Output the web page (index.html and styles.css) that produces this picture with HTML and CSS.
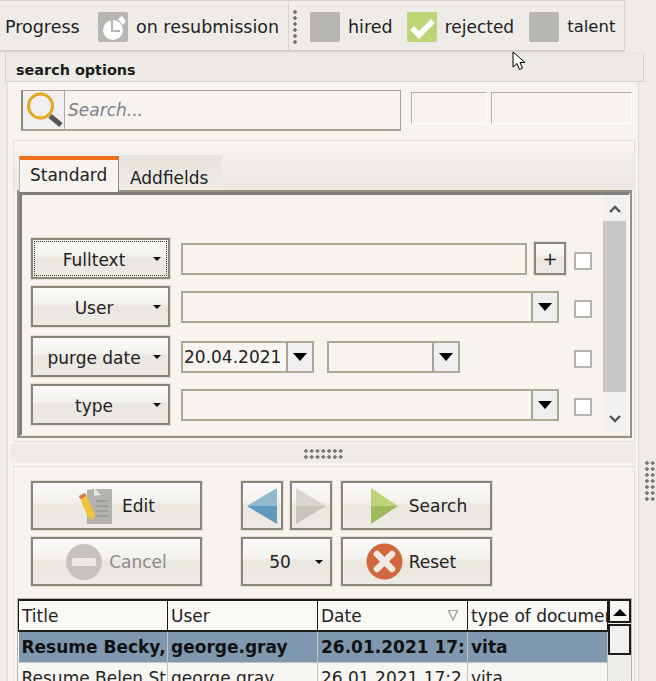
FILE: index.html
```html
<!DOCTYPE html>
<html lang="en">
<head>
    <meta charset="UTF-8">
    <meta name="viewport" content="width=device-width, initial-scale=1.0">
    <title>Search options</title>
    <link rel="stylesheet" href="styles.css">
</head>
<body>
    <div class="toolbar">
        <div class="toolbar-main">
            <span class="tool-title">Progress</span>
            <span class="state-box state-clock">
                <svg width="30" height="30" viewBox="0 0 30 30">
                    <circle cx="15" cy="18" r="10" fill="#fff"/>
                    <path d="M20 7l4-3 4 5-3 4z" fill="#fff"/>
                    <path d="M14 7v12h8" fill="none" stroke="#b7b6b3" stroke-width="2.200"/>
                </svg>
            </span>
            <span class="tool-label">on resubmission</span>
        </div>
        <div class="toolbar-grip"></div>
        <span class="state-box state-hired"></span>
        <span class="tool-label label-hired">hired</span>
        <span class="state-box state-rejected">
            <svg width="30" height="30" viewBox="0 0 30 30">
                <path d="M5 16l7 7L26 9" fill="none" stroke="#fff" stroke-width="5.500"/>
            </svg>
        </span>
        <span class="tool-label label-rejected">rejected</span>
        <span class="state-box state-talent"></span>
        <span class="tool-label label-talent">talent</span>
    </div>

    <div class="section-head">search options</div>

    <div class="layout">
        <div class="content">
            <div class="search-row">
                <div class="search-box">
                    <span class="search-icon">
                        <svg width="40" height="38" viewBox="0 0 40 38">
                            <circle cx="17.500" cy="15" r="12" fill="none" stroke="#e3a91f" stroke-width="3"/>
                            <path d="M27 25l11 9" stroke="#555" stroke-width="5"/>
                        </svg>
                    </span>
                    <span class="search-text">Search...</span>
                </div>
                <div class="sunken sunken-small"></div>
                <div class="sunken sunken-wide"></div>
            </div>

            <div class="filter-group">
                <div class="tab-strip">
                    <div class="tab tab-active">Standard</div>
                    <div class="tab">Addfields</div>
                </div>
                <div class="frame">
                    <div class="frame-inner">
                        <div class="filter-rows">
                            <div class="filter-row">
                                <div class="btn filter-btn btn-focus"><span class="filter-name">Fulltext</span><span class="caret"></span></div>
                                <div class="controls">
                                    <div class="field field-text"></div>
                                    <div class="btn plus-btn">+</div>
                                </div>
                                <span class="check"></span>
                            </div>
                            <div class="filter-row filter-row-user">
                                <div class="btn filter-btn"><span class="filter-name">User</span><span class="caret"></span></div>
                                <div class="controls">
                                    <div class="field combo combo-full"><span class="combo-value"></span><span class="combo-arrow"></span></div>
                                </div>
                                <span class="check"></span>
                            </div>
                            <div class="filter-row">
                                <div class="btn filter-btn"><span class="filter-name">purge date</span><span class="caret"></span></div>
                                <div class="controls controls-date">
                                    <div class="field combo combo-date"><span class="combo-value">20.04.2021</span><span class="combo-arrow"></span></div>
                                    <div class="field combo combo-date"><span class="combo-value"></span><span class="combo-arrow"></span></div>
                                </div>
                                <span class="check"></span>
                            </div>
                            <div class="filter-row">
                                <div class="btn filter-btn"><span class="filter-name">type</span><span class="caret"></span></div>
                                <div class="controls">
                                    <div class="field combo combo-full"><span class="combo-value"></span><span class="combo-arrow"></span></div>
                                </div>
                                <span class="check"></span>
                            </div>
                        </div>
                        <div class="scrollbar">
                            <div class="scroll-up">
                                <svg width="14" height="10" viewBox="0 0 14 10"><path d="M2 8l5-5 5 5" fill="none" stroke="#555" stroke-width="2.400"/></svg>
                            </div>
                            <div class="scroll-thumb"></div>
                            <div class="scroll-down">
                                <svg width="14" height="10" viewBox="0 0 14 10"><path d="M2 2l5 5 5-5" fill="none" stroke="#555" stroke-width="2.400"/></svg>
                            </div>
                        </div>
                    </div>
                </div>
            </div>

            <div class="splitter"><div class="splitter-dots"></div></div>

            <div class="results-group">
                <div class="actions">
                    <div class="btn action-btn">
                        <svg width="38" height="38" viewBox="0 0 38 38">
                            <path d="M9 3l6-1h19v35H9z" fill="#b3b2ae"/>
                            <path d="M16 1l7 7-7 1z" fill="#e8e6e1"/>
                            <path d="M18 14h12M18 19h12M18 24h12M18 29h12" stroke="#98968f" stroke-width="1.500"/>
                            <path d="M1 9l6-3 10 21-2 6-5-3z" fill="#eec43c"/>
                            <path d="M1 9l6-3 1.500 3-6 3z" fill="#e0744a"/>
                        </svg>
                        <span>Edit</span>
                    </div>
                    <div class="btn action-btn col-prev">
                        <svg width="32" height="36" viewBox="0 0 32 36">
                            <path d="M31 0v18H1z" fill="#92b8cf"/>
                            <path d="M31 36V18H1z" fill="#5f9abd"/>
                        </svg>
                    </div>
                    <div class="btn action-btn col-next">
                        <svg width="32" height="36" viewBox="0 0 32 36">
                            <path d="M1 0v18h30z" fill="#d9d6d0"/>
                            <path d="M1 36V18h30z" fill="#c7c4be"/>
                        </svg>
                    </div>
                    <div class="btn action-btn col-main action-search">
                        <svg width="27" height="36" viewBox="0 0 27 36">
                            <path d="M0 0v18h27z" fill="#bcd477"/>
                            <path d="M0 36V18h27z" fill="#9dba5e"/>
                        </svg>
                        <span>Search</span>
                    </div>
                    <div class="btn action-btn action-off">
                        <svg width="36" height="36" viewBox="0 0 36 36">
                            <circle cx="18" cy="18" r="18" fill="#c6c3be"/>
                            <rect x="6" y="14" width="24" height="8" rx="2" fill="#ebe9e4"/>
                        </svg>
                        <span>Cancel</span>
                    </div>
                    <div class="btn action-btn col-count"><span class="filter-name">50</span><span class="caret"></span></div>
                    <div class="btn action-btn col-main action-reset">
                        <svg width="37" height="37" viewBox="0 0 37 37">
                            <circle cx="18.500" cy="18.500" r="18" fill="#d0683c"/>
                            <path d="M11 11l15 15M26 11L11 26" stroke="#f1e9e2" stroke-width="6.500" stroke-linecap="round"/>
                        </svg>
                        <span>Reset</span>
                    </div>
                </div>

                <div class="grid-wrap">
                    <table class="doc-table">
                        <thead>
                            <tr>
                                <th class="col-title">Title</th>
                                <th class="col-user">User</th>
                                <th class="col-date">Date<svg class="sort-mark" width="12" height="12" viewBox="0 0 12 12"><path d="M1.500 1.500h9L6 11z" fill="none" stroke="#9c9c9c" stroke-width="1.200"/></svg></th>
                                <th class="col-type">type of document</th>
                            </tr>
                        </thead>
                        <tbody>
                            <tr class="row-selected">
                                <td>Resume Becky,</td>
                                <td>george.gray</td>
                                <td>26.01.2021 17:</td>
                                <td>vita</td>
                            </tr>
                            <tr>
                                <td>Resume Belen St</td>
                                <td>george.gray</td>
                                <td>26.01.2021 17:2</td>
                                <td>vita</td>
                            </tr>
                        </tbody>
                    </table>
                    <div class="grid-scroll">
                        <div class="grid-up"><span class="grid-up-arrow"></span></div>
                        <div class="grid-thumb"></div>
                    </div>
                </div>
            </div>
        </div>
        <div class="side-grip"><div class="side-dots"></div></div>
    </div>

    <svg class="cursor" width="14" height="22" viewBox="0 0 14 22">
        <path d="M1 1v15l4-3.500 2.500 6 3-1.300-2.500-5.700h5z" fill="#fff" stroke="#000" stroke-width="1"/>
    </svg>
</body>
</html>
```

FILE: styles.css
```css
html, body {
    margin: 0;
    height: 100%;
    overflow: hidden;
}
body {
    position: relative;
    font-family: "DejaVu Sans", sans-serif;
    font-size: 17px;
    color: #222;
    background-color: #efece7;
}

/* top toolbar */
.toolbar {
    display: flex;
    align-items: center;
    box-sizing: border-box;
    width: 625px;
    height: 52px;
    padding-top: 2px;
    font-size: 17.5px;
    border-top: 1px solid #d8d3cb;
    border-right: 1px solid #d8d3cb;
    border-bottom: 2px solid #d5d0c8;
}
.toolbar-main {
    display: flex;
    align-items: center;
    box-sizing: border-box;
    flex: none;
    width: 289px;
    height: 100%;
    padding-left: 5px;
    border-right: 1px solid #d8d3cb;
}
.tool-title {
    width: 78px;
    margin-right: 15px;
}
.tool-label {
    margin-left: 8px;
}
.label-rejected {
    font-size: 17px;
}
.label-talent {
    font-size: 16.5px;
}
.toolbar-grip {
    flex: none;
    width: 4px;
    height: 36px;
    margin: 0 13px 0 4px;
    background: radial-gradient(circle, #6f6f6f 1.5px, transparent 1.9px) 0 0 / 4px 6px;
}
.state-box {
    display: block;
    flex: none;
    width: 30px;
    height: 30px;
    border-radius: 2px;
    background-color: #b7b6b3;
}
.state-rejected {
    margin-left: 14px;
    background-color: #bcd676;
}
.state-talent {
    margin-left: 15px;
}
.state-box svg {
    display: block;
}

/* header bar */
.section-head {
    box-sizing: border-box;
    width: 639px;
    height: 29px;
    margin: 1px 0 0 5px;
    padding: 8px 0 0 10px;
    font-size: 14.4px;
    font-weight: bold;
    color: #1c1c1c;
    background-color: #eeebe6;
    border: 1px solid #d5d0c8;
    border-top-color: #e8e4dd;
}

.layout {
    display: flex;
}
.content {
    box-sizing: border-box;
    width: 634px;
    margin-left: 7px;
    background-color: #f7f4ef;
    border-left: 1px solid #e2ded7;
    border-right: 1px solid #e2ded7;
}

/* search line */
.search-row {
    display: flex;
    align-items: flex-start;
    height: 58px;
    padding: 8px 0 0 13px;
    box-sizing: border-box;
}
.search-box {
    display: flex;
    align-items: center;
    box-sizing: border-box;
    width: 380px;
    height: 41px;
    border: 1px solid #a9a294;
    border-bottom-width: 2px;
    border-left: 2px solid #8f897d;
}
.search-icon {
    display: block;
    width: 41px;
    height: 38px;
    background-color: #efefef;
    border-right: 1px solid #aaa;
}
.search-icon svg {
    display: block;
}
.search-text {
    margin-left: 3px;
    font-style: italic;
    color: #80808a;
}
.sunken {
    box-sizing: border-box;
    height: 32px;
    margin-top: 2px;
    border-top: 1px solid #b4b1ab;
    border-left: 1px solid #b4b1ab;
    border-bottom: 1px solid #fff;
    border-right: 1px solid #fff;
}
.sunken-small {
    width: 76px;
    margin-left: 10px;
}
.sunken-wide {
    width: 141px;
    margin-left: 4px;
}

/* filter panel */
.filter-group {
    box-sizing: border-box;
    width: 622px;
    height: 302px;
    margin-left: 5px;
    padding-top: 11px;
    border: 1px solid #e4e0d9;
}
.tab-strip {
    display: flex;
    align-items: flex-end;
    height: 38px;
    padding-left: 5px;
    background: linear-gradient(#f3f0eb, #edeae5);
}
.tab {
    box-sizing: border-box;
    width: 103px;
    height: 35px;
    padding: 13px 0 0 11px;
    background: linear-gradient(#e6e3dd, #efece7);
}
.tab-active {
    position: relative;
    z-index: 1;
    width: 100px;
    height: 36px;
    padding: 5px 0 0 10px;
    margin-bottom: -2px;
    background: #f7f4ef;
    border-top: 4px solid #ef6f1a;
    border-left: 1px solid #b9b3a8;
    border-right: 1px solid #8f897d;
}
.frame {
    box-sizing: border-box;
    width: 615px;
    height: 248px;
    margin-left: 3px;
    border: 2px solid #979083;
}
.frame-inner {
    display: flex;
    box-sizing: border-box;
    height: 100%;
    border-top: 3px solid #7f7f7f;
    border-left: 3px solid #7f7f7f;
    border-right: 1px solid #fff;
    border-bottom: 1px solid #e8e6e2;
    padding-right: 3px;
}
.filter-rows {
    flex: 1;
    padding: 43px 0 0 9px;
}
.filter-row {
    display: flex;
    align-items: center;
    height: 41px;
    margin-bottom: 7px;
}
.filter-row-user {
    margin-bottom: 9px;
}
.btn {
    display: flex;
    align-items: center;
    justify-content: center;
    box-sizing: border-box;
    color: #222;
    background: linear-gradient(#fbfaf8 0%, #f4f2ee 40%, #eae6e0 52%, #eeebe6 100%);
    border: 2px solid #8b8478;
    box-shadow: 0 0 0 1px #e4e0d9;
}
.filter-btn {
    width: 139px;
    height: 41px;
}
.filter-btn .filter-name {
    padding-top: 2px;
}
.btn-focus {
    outline: 1px dotted #333;
    outline-offset: -4px;
}
.filter-name {
    flex: 1;
    padding-left: 2px;
    text-align: center;
}
.caret {
    width: 0;
    height: 0;
    margin-right: 7px;
    border-top: 4px solid #111;
    border-left: 4px solid transparent;
    border-right: 4px solid transparent;
}
.controls {
    display: flex;
    align-items: center;
    gap: 7px;
    width: 385px;
    margin-left: 11px;
}
.controls-date {
    gap: 13px;
}
.field {
    box-sizing: border-box;
    height: 32px;
    border: 2px solid #aea797;
    background-color: #f8f5f0;
}
.field-text {
    width: 346px;
}
.plus-btn {
    width: 32px;
    height: 33px;
    font-size: 18px;
}
.combo {
    display: flex;
}
.combo-full {
    width: 378px;
}
.combo-date {
    width: 133px;
}
.combo-value {
    flex: 1;
    padding-left: 1px;
    line-height: 28px;
    color: #222;
}
.combo-arrow {
    position: relative;
    flex: none;
    width: 24px;
    background-color: #efefef;
    border-left: 2px solid #a8a39a;
}
.combo-arrow::after {
    content: "";
    position: absolute;
    left: 5px;
    top: 10px;
    border-top: 8px solid #000;
    border-left: 7px solid transparent;
    border-right: 7px solid transparent;
}
.check {
    display: block;
    box-sizing: border-box;
    flex: none;
    width: 18px;
    height: 18px;
    margin: 5px 0 0 8px;
    background-color: #fff;
    border: 2px solid #b5b3ae;
}
.scrollbar {
    display: flex;
    flex-direction: column;
    flex: none;
    width: 23px;
    margin: 1px 0 4px;
    background-color: #f0f0f0;
}
.scroll-up {
    display: flex;
    align-items: center;
    justify-content: center;
    height: 25px;
}
.scroll-thumb {
    height: 171px;
    background-color: #c8c8c8;
}
.scroll-down {
    display: flex;
    align-items: flex-end;
    justify-content: center;
    flex: 1;
    padding-bottom: 7px;
}

/* splitter */
.splitter {
    display: flex;
    align-items: center;
    justify-content: center;
    height: 19px;
    margin: 2px 2px 3px 2px;
    background-color: #efece7;
}
.splitter-dots {
    width: 41px;
    height: 12px;
    background: radial-gradient(circle, #777 1.5px, transparent 1.9px) 0 0 / 5.8px 6px;
}

/* results panel */
.results-group {
    box-sizing: border-box;
    width: 622px;
    height: 240px;
    margin-left: 5px;
    padding: 14px 0 0 3px;
    border: 1px solid #e4e0d9;
}
.actions {
    display: grid;
    grid-template-columns: 171px 25px 42px 42px 153px;
    grid-template-rows: 49px 49px;
    column-gap: 7px;
    row-gap: 7px;
    margin-left: 14px;
}
.action-btn {
    gap: 6px;
    height: 49px;
}
.col-prev {
    grid-column: 3;
}
.col-next {
    grid-column: 4;
}
.col-count {
    grid-column: 3 / 5;
    padding-left: 6px;
}
.col-main {
    grid-column: 5;
    margin-left: 2px;
}
.action-search {
    gap: 11px;
    padding-left: 5px;
}
.action-reset {
    padding-right: 11px;
}
.action-off {
    color: #8b8b8b;
}
.action-off span {
    margin-left: 1px;
}

/* document table */
.grid-wrap {
    display: flex;
    box-sizing: border-box;
    width: 615px;
    margin-top: 12px;
    border: 1px solid #b9b5ad;
    background-color: #f8f6f2;
}
.doc-table {
    flex: none;
    width: 589px;
    table-layout: fixed;
    border-collapse: collapse;
}
.doc-table th,
.doc-table td {
    box-sizing: border-box;
    overflow: hidden;
    padding: 0 0 0 3px;
    white-space: nowrap;
    text-align: left;
    font-size: 17px;
    color: #222;
}
.doc-table th {
    position: relative;
    height: 31px;
    font-weight: normal;
    background-color: #fbf9f6;
    border: 2px solid #1c1c1c;
    border-left-width: 1px;
    border-right-width: 1px;
}
.doc-table td {
    height: 31px;
    border-right: 1px solid #c6c3bd;
    border-bottom: 1px solid #c6c3bd;
}
.col-title {
    width: 149px;
}
.col-user,
.col-date {
    width: 150px;
}
.col-type {
    width: 140px;
}
.sort-mark {
    position: absolute;
    top: 8px;
    right: 8px;
}
.row-selected td {
    font-weight: bold;
    color: #111;
    background-color: #7f98b0;
}
.grid-scroll {
    flex: 1;
    background: repeating-conic-gradient(#f7f5f1 0 25%, #e6e6e2 0 50%) 0 0 / 2px 2px;
}
.grid-up {
    display: flex;
    justify-content: center;
    box-sizing: border-box;
    height: 24px;
    padding-top: 8px;
    background-color: #f8f6f2;
    border: 2px solid #1c1c1c;
}
.grid-up-arrow {
    height: 0;
    border-bottom: 7px solid #000;
    border-left: 7px solid transparent;
    border-right: 7px solid transparent;
}
.grid-thumb {
    box-sizing: border-box;
    height: 31px;
    margin-top: 1px;
    background-color: #f0f0f0;
    border: 2px solid #1c1c1c;
}

/* grip on the right edge */
.side-grip {
    flex: 1;
    padding: 378px 0 0 5px;
}
.side-dots {
    width: 12px;
    height: 42px;
    background: radial-gradient(circle, #777 1.5px, transparent 1.9px) 0 0 / 5.8px 6px;
}

/* mouse pointer lies over the page */
.cursor {
    position: absolute;
    left: 512px;
    top: 51px;
}
```
